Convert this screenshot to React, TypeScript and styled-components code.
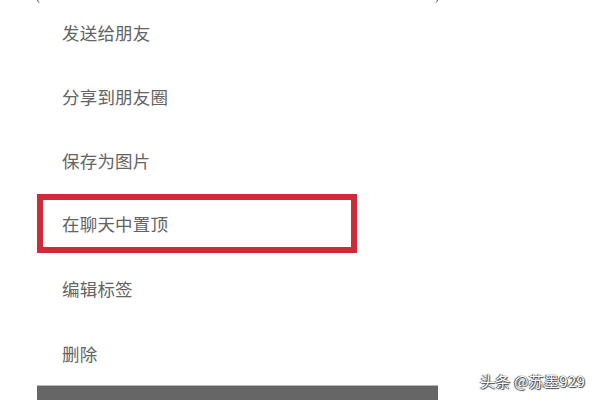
import React from 'react';
import styled, { createGlobalStyle } from 'styled-components';

const GlobalStyle = createGlobalStyle`
  html, body {
    margin: 0;
    padding: 0;
    background: #ffffff;
  }
  body {
    width: 600px;
    height: 400px;
    overflow: hidden;
  }
`;

const Page = styled.div`
  position: relative;
  width: 600px;
  height: 400px;
  background: #ffffff;
  font-family: 'Noto Sans CJK SC', 'Noto Sans', sans-serif;
  overflow: hidden;
`;

const Sheet = styled.div`
  margin-left: 37px;
  width: 401px;
  height: 400px;
  display: flex;
  flex-direction: column;
`;

const Row = styled.div`
  height: 64.2px;
  flex: none;
  display: flex;
  align-items: center;
  box-sizing: border-box;
`;

const Label = styled.span<{ $boxed?: boolean }>`
  display: flex;
  align-items: center;
  box-sizing: border-box;
  height: ${({ $boxed }) => ($boxed ? '59px' : 'auto')};
  width: ${({ $boxed }) => ($boxed ? '320px' : 'auto')};
  margin-top: ${({ $boxed }) => ($boxed ? '-3px' : '0')};
  padding-left: ${({ $boxed }) => ($boxed ? '19px' : '25px')};
  border: ${({ $boxed }) => ($boxed ? '6px solid #cf2a38' : 'none')};
  font-size: 17.5px;
  color: #646464;
  letter-spacing: 0.2px;
`;

const BottomBar = styled.div`
  flex: 1;
  background: #666666;
  border-top: 1px solid #b5b5b5;
`;

const Corner = styled.div<{ $side: 'left' | 'right' }>`
  position: absolute;
  top: -3px;
  ${({ $side }) => ($side === 'left' ? 'left: 37px;' : 'left: 434px;')}
  width: 3px;
  height: 6px;
  border-${({ $side }) => $side}: 1.5px solid #444;
  border-radius: ${({ $side }) => ($side === 'left' ? '0 0 0 4px' : '0 0 4px 0')};
`;

const Watermark = styled.div`
  position: absolute;
  left: 480px;
  top: 370px;
  font-size: 15px;
  color: #ffffff;
  text-shadow: 0 0 1px #333, 1px 1px 1px #444, -1px 0 1px #444;
  white-space: nowrap;
  letter-spacing: 0.3px;
`;

const items = ['发送给朋友', '分享到朋友圈', '保存为图片', '在聊天中置顶', '编辑标签', '删除'];

const App: React.FC = () => {
  return (
    <Page>
      <GlobalStyle />
      <Sheet>
        {items.map((item) => (
          <Row key={item}>
            <Label $boxed={item === '在聊天中置顶'}>{item}</Label>
          </Row>
        ))}
        <BottomBar />
      </Sheet>
      <Corner $side="left" />
      <Corner $side="right" />
      <Watermark>头条 @苏墨929</Watermark>
    </Page>
  );
};

export default App;
